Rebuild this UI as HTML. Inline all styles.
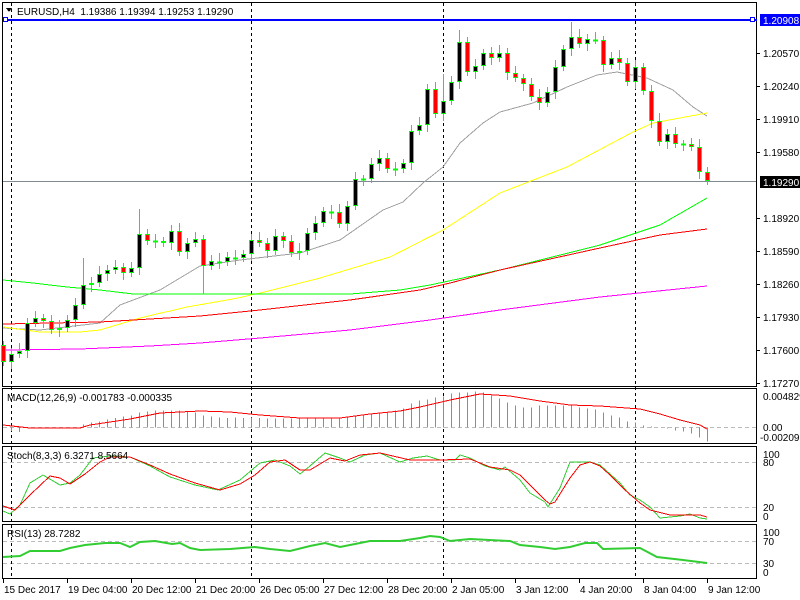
<!DOCTYPE html>
<html><head><meta charset="utf-8"><style>
html,body{margin:0;padding:0;background:#fff;width:800px;height:600px;overflow:hidden}
svg text{font-family:"Liberation Sans",sans-serif;font-size:10px;fill:#000}
</style></head><body>
<svg id="s" width="800" height="600" xmlns="http://www.w3.org/2000/svg" shape-rendering="crispEdges"></svg>
<script>
(function(){
var S=document.getElementById('s');var h='';
function pl(pts,col,w,extra){h+='<polyline fill="none" stroke="'+col+'" stroke-width="'+(w||1)+'" '+(extra||'')+' points="'+pts.map(function(p){return p[0]+','+p[1]}).join(' ')+'"/>';}
function ln(x1,y1,x2,y2,col,w,extra){h+='<line x1="'+x1+'" y1="'+y1+'" x2="'+x2+'" y2="'+y2+'" stroke="'+col+'" stroke-width="'+(w||1)+'" '+(extra||'')+'/>';}
function tx(x,y,t,col){h+='<text x="'+x+'" y="'+y+'"'+(col?' style="fill:'+col+'"':'')+'>'+t+'</text>';}
h+='<rect x="2.5" y="2.5" width="754" height="384" fill="none" stroke="#000"/>';
h+='<rect x="2.5" y="388.5" width="754" height="55" fill="none" stroke="#000"/>';
h+='<rect x="2.5" y="446.5" width="754" height="75" fill="none" stroke="#000"/>';
h+='<rect x="2.5" y="524.5" width="754" height="54" fill="none" stroke="#000"/>';
[427.5,462.5,507.5,541.5,563.5].forEach(function(y){ln(3,y,756,y,'#bbb',1,'stroke-dasharray="4,3"')});
[11.5,251.5,443.5,635.5].forEach(function(x){ln(x,3,x,579,'#000',1,'stroke-dasharray="3,3"')});
ln(3,181.5,756,181.5,'#808890',1);
ln(3,20,757,20,'#0000ff',2);
h+='<rect x="3.5" y="17.5" width="4" height="4" fill="#fff" stroke="#00f"/>';
h+='<rect x="750.5" y="17.5" width="4" height="4" fill="#fff" stroke="#00f"/>';
pl([[3,328],[40,330],[100,323],[120,305],[160,290],[200,266],[240,260],[300,253],[340,240],[383,210],[403,202],[423,183],[443,167],[460,143],[483,123],[500,112],[533,103],[567,87],[597,75],[617,72],[647,78],[673,90],[693,107],[707,116]],'#a0a0a0');
pl([[3,327],[40,332],[80,332],[100,330],[140,318],[187,307],[233,299],[260,293],[320,278],[390,257],[443,230],[500,193],[567,167],[633,132],[653,123],[707,113]],'#ffff00');
pl([[3,280],[33,283],[67,287],[100,290],[133,294],[350,294],[400,290],[430,285],[500,270],[600,245],[660,225],[707,198]],'#00ff00');
pl([[3,324],[100,322],[200,316],[260,310],[350,300],[420,290],[450,283],[500,270],[600,248],[660,235],[707,229]],'#ff0000');
pl([[3,350],[80,349],[150,346],[200,343],[260,338],[350,330],[430,320],[500,310],[600,297],[707,286]],'#ff00ff');
var C=[362,354,351,323,318,321,330,328,320,305,285,283,274,270,267,273,268,234,241,241,243,231,252,243,239,266,261,262,257,258,254,240,243,251,236,241,253,251,233,223,211,212,224,206,179,179,164,158,169,169,163,131,125,89,114,101,82,42,72,66,53,58,53,73,78,84,97,103,92,67,49,37,44,39,40,65,58,63,82,67,91,121,142,134,144,144,147,172,181];
var HI={17:209,57:30,71:22,10:258,55:74},LO={25:294,0:366};
var prev=345;
for(var i=0;i<C.length;i++){var x=3+8*i,o=prev,c=C[i];var tp=Math.min(o,c),bt=Math.max(o,c);
var hi=HI[i]!==undefined?HI[i]:tp-4-(i*7%5),lo=LO[i]!==undefined?LO[i]:bt+4+(i*3%6);
ln(x+0.5,hi,x+0.5,lo,'#00ff00');
if(bt-tp<2){ln(x-2,c+0.5,x+3,c+0.5,'#00ff00',2);}
else h+='<rect x="'+(x-1.5)+'" y="'+(tp+0.5)+'" width="4" height="'+(bt-tp-1)+'" fill="'+(c<o?'#000':'#ff0000')+'" stroke="#00ff00"/>';
prev=c;}
var HV={83:3,91:5,99:6,107:8,115:9.5,123:11,131:12,139:15,147:16,155:17,163:17,171:17,179:17,187:16,195:15,203:12,211:11,219:10,227:9.5,235:10,243:9.5,251:10,259:9.5,267:9,275:9,283:9,291:9,299:9,307:9,315:9,323:9,331:9.5,339:10,347:10,355:11,363:12,371:13,379:14,387:15,395:17,403:19,411:24,419:27,427:28,435:30,443:31,451:34,459:35,467:35,475:36,483:35,491:32,499:29,507:25,515:22,523:20,531:20,539:22,547:22,555:22,563:22,571:22,579:20,587:19,595:18,603:15,611:12,619:10,627:6,635:5,643:2,651:1,659:0,667:-1,675:-3,683:-4,691:-6,699:-10,707:-14};
for(var k in HV){var v=HV[k];ln(+k+0.5,427.5,+k+0.5,427.5-v,'#32cd32');}
ln(11.5,427,11.5,431,'#32cd32');ln(19.5,427,19.5,432,'#32cd32');
pl([[3,425],[30,428],[80,428],[90,425],[130,419],[160,413],[200,411],[230,412],[260,415],[300,418],[340,418],[370,414],[400,411],[420,407],[450,400],[480,394],[510,396],[540,401],[570,405],[600,406],[640,409],[660,414],[680,420],[700,425],[707,429]],'#ff0000');
pl([[3,511],[10,514],[20,505],[30,483],[43,475],[60,485],[70,483],[80,475],[93,458],[110,456],[130,457],[150,466],[170,477],[195,485],[218,490],[240,480],[260,463],[275,460],[290,466],[300,474],[310,466],[325,453],[340,458],[350,462],[365,455],[380,453],[400,462],[413,458],[427,456],[440,460],[455,460],[460,455],[470,458],[485,466],[500,470],[505,467],[520,480],[530,493],[545,502],[548,507],[560,488],[570,462],[590,462],[600,465],[620,483],[630,495],[640,500],[650,507],[660,518],[680,516],[690,514],[700,518],[707,519]],'#32cd32');
pl([[3,506],[15,510],[30,495],[50,476],[60,478],[70,484],[85,474],[100,462],[110,457],[130,457],[150,465],[170,474],[195,483],[220,490],[240,484],[255,475],[270,462],[285,460],[300,470],[310,470],[330,458],[345,461],[360,455],[380,453],[410,460],[440,460],[470,459],[490,467],[510,470],[520,475],[530,485],[545,500],[550,504],[555,502],[570,478],[580,465],[590,462],[600,466],[610,475],[625,490],[640,503],[650,510],[670,515],[680,515],[700,515],[707,517]],'#ff0000');
pl([[3,557],[20,556],[30,551],[60,551],[70,548],[85,545],[105,543],[120,543],[130,547],[140,542],[155,541],[172,544],[180,543],[190,548],[200,550],[230,549],[255,547],[270,549],[290,551],[310,546],[325,543],[340,547],[355,544],[370,541],[400,541],[420,538],[430,536],[440,537],[450,541],[460,540],[470,539],[510,541],[520,545],[540,547],[555,549],[570,547],[585,543],[597,543],[603,549],[640,548],[657,557],[683,560],[707,563]],'#32cd32',2,'shape-rendering="auto"');
[[53,'1.20570'],[86,'1.20240'],[119,'1.19910'],[152,'1.19580'],[218,'1.18920'],[251,'1.18590'],[284,'1.18260'],[317,'1.17930'],[350,'1.17600'],[383,'1.17270']].forEach(function(a){ln(757,a[0]+0.5,760,a[0]+0.5,'#000');tx(763,a[0]+4,a[1]);});
h+='<rect x="760" y="14" width="40" height="12" fill="#0000ff"/>';tx(763,24,'1.20908','#fff');
h+='<rect x="760" y="176" width="40" height="12" fill="#000"/>';tx(763,186,'1.19290','#fff');
tx(763,400,'0.004829');tx(763,431,'0.00');tx(760,441,'-0.002098');
tx(763,458,'100');tx(763,466,'80');tx(763,511,'20');tx(763,520,'0');
tx(763,536,'100');tx(763,545,'70');tx(763,567,'30');tx(763,576,'0');
h+='<polygon points="6,8 12,8 9,12" fill="#000"/>';
tx(17,15,'EURUSD,H4&#160; 1.19386 1.19394 1.19253 1.19290');
tx(7,401,'MACD(12,26,9) -0.001783 -0.000335');
tx(7,459,'Stoch(8,3,3) 6.3271 8.5664');
tx(7,537,'RSI(13) 28.7282');
[[3,'15 Dec 2017'],[67,'19 Dec 04:00'],[131,'20 Dec 12:00'],[195,'21 Dec 20:00'],[259,'26 Dec 05:00'],[323,'27 Dec 12:00'],[387,'28 Dec 20:00'],[451,'2 Jan 05:00'],[515,'3 Jan 12:00'],[579,'4 Jan 20:00'],[643,'8 Jan 04:00'],[707,'9 Jan 12:00']].forEach(function(a){ln(a[0]+0.5,579,a[0]+0.5,583,'#000');tx(a[0]+1,593,a[1]);});
S.innerHTML=h;
})();
</script>
</body></html>
